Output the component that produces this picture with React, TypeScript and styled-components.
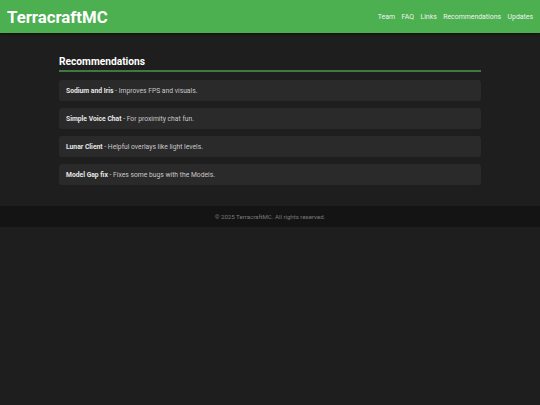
import React from "react";
import styled, { createGlobalStyle } from "styled-components";

const Global = createGlobalStyle`
  html, body { margin: 0; padding: 0; background: #1e1e1e; }
  body { font-family: Roboto, "Liberation Sans", sans-serif; color: #e0e0e0; }
  * { box-sizing: border-box; }
`;

const Header = styled.header`
  background: #4caf50;
  height: 33px;
  display: flex;
  align-items: center;
  justify-content: space-between;
  padding: 0 7px;
  box-shadow: 0 1px 2px rgba(0, 0, 0, 0.5);
`;

const Logo = styled.h1`
  margin: 0;
  font-size: 16.8px;
  font-weight: 700;
  color: #ffffff;
`;

const Nav = styled.nav`
  display: flex;
  gap: 6.5px;
`;

const NavLink = styled.a`
  color: #f2f2f2;
  text-decoration: none;
  font-size: 6.9px;
`;

const Main = styled.main`
  max-width: 422px;
  margin: 0 auto;
  padding: 23px 0 21px;
`;

const Title = styled.h2`
  margin: 0 0 8px;
  font-size: 10.2px;
  font-weight: 700;
  color: #ffffff;
  padding-bottom: 3px;
  border-bottom: 2px solid #3d7a40;
`;

const List = styled.ul`
  list-style: none;
  margin: 0;
  padding: 0;
  display: flex;
  flex-direction: column;
  gap: 7px;
`;

const Item = styled.li`
  background: #2a2a2a;
  border-radius: 3px;
  height: 21px;
  padding: 0 7px;
  display: flex;
  align-items: center;
  font-size: 6.75px;
  color: #c8c8c8;
  white-space: pre;
`;

const Name = styled.strong`
  color: #e6e6e6;
  font-weight: 700;
`;

const Footer = styled.footer`
  background: #141414;
  height: 21px;
  display: flex;
  align-items: center;
  justify-content: center;
  font-size: 6.1px;
  color: #7a7a7a;
`;

const items = [
  ["Sodium and Iris", "Improves FPS and visuals."],
  ["Simple Voice Chat", "For proximity chat fun."],
  ["Lunar Client", "Helpful overlays like light levels."],
  ["Model Gap fix", "Fixes some bugs with the Models."],
];

export default function App() {
  return (
    <>
      <Global />
      <Header>
        <Logo>TerracraftMC</Logo>
        <Nav>
          {["Team", "FAQ", "Links", "Recommendations", "Updates"].map((l) => (
            <NavLink key={l} href="#">{l}</NavLink>
          ))}
        </Nav>
      </Header>
      <Main>
        <Title>Recommendations</Title>
        <List>
          {items.map(([n, d]) => (
            <Item key={n}>
              <Name>{n}</Name>{" - " + d}
            </Item>
          ))}
        </List>
      </Main>
      <Footer>© 2025 TerracraftMC. All rights reserved.</Footer>
    </>
  );
}
